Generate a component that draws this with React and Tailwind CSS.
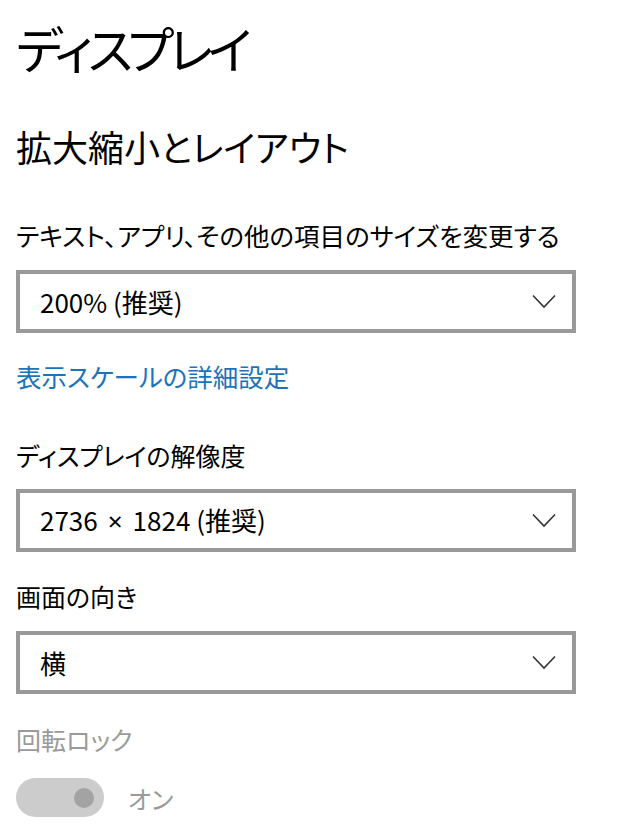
import React from "react";

const font = { fontFamily: '"Noto Sans CJK JP", "Noto Sans", sans-serif' };
const latin = { fontFamily: '"Noto Sans", "Noto Sans CJK JP", sans-serif' };

function Chevron() {
  return (
    <svg width="24" height="15" viewBox="0 0 24 15" className="shrink-0">
      <polyline points="1,1.5 12,13 23,1.5" fill="none" stroke="#333" strokeWidth="1.6" />
    </svg>
  );
}

function Dropdown({ children }) {
  return (
    <div className="w-[560px] h-[63px] border-[4px] border-[#999999] bg-white flex items-center justify-between pl-[20px] pr-[16px]">
      <span className="text-[26px] text-black leading-none">{children}</span>
      <Chevron />
    </div>
  );
}

export default function App() {
  return (
    <div className="w-[620px] h-[839px] bg-white overflow-hidden px-4 [font-feature-settings:'palt']" style={font}>
      <div className="pt-[14px] text-[50px] leading-[66px] tracking-[-5px] text-black">ディスプレイ</div>
      <div className="mt-[43px] text-[36px] leading-[46px] text-black">拡大縮小とレイアウト</div>
      <div className="mt-[50px] text-[25.5px] leading-[32px] text-black">テキスト、アプリ、その他の項目のサイズを変更する</div>
      <div className="mt-[19px]">
        <Dropdown>200% (推奨)</Dropdown>
      </div>
      <div className="mt-[27px] text-[25.5px] leading-[32px] text-[#1b74b9]">表示スケールの詳細設定</div>
      <div className="mt-[47px] text-[25px] leading-[32px] text-black">ディスプレイの解像度</div>
      <div className="mt-[18px]">
        <Dropdown>
          2736<span className="mx-[10px]" style={latin}>×</span>1824 (推奨)
        </Dropdown>
      </div>
      <div className="mt-[28px] text-[25px] leading-[32px] text-black">画面の向き</div>
      <div className="mt-[19px]">
        <Dropdown>横</Dropdown>
      </div>
      <div className="mt-[29px] text-[25px] leading-[32px] text-[#9a9a9a]">回転ロック</div>
      <div className="mt-[23px] flex items-center gap-[24px]">
        <div className="w-[88px] h-[39px] rounded-full bg-[#cccccc] flex items-center justify-end pr-[10px]">
          <div className="w-[20px] h-[20px] rounded-full bg-[#a3a3a3]" />
        </div>
        <span className="text-[25px] leading-[32px] text-[#9a9a9a]">オン</span>
      </div>
    </div>
  );
}
